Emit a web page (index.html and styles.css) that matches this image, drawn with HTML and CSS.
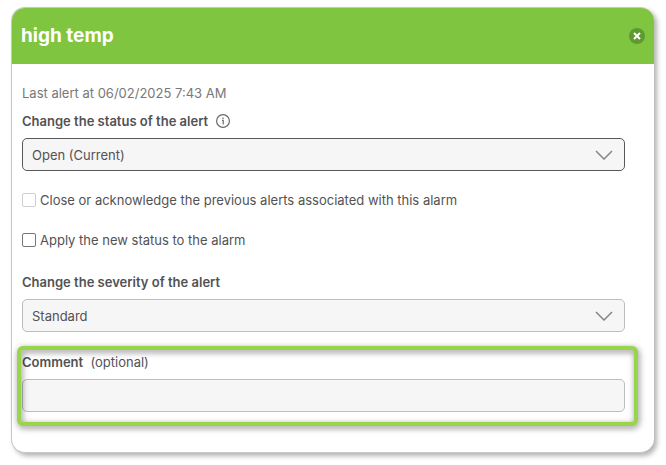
FILE: index.html
```html
<!DOCTYPE html>
<html lang="en">
  <head>
    <meta charset="UTF-8" />
    <meta name="viewport" content="width=device-width, initial-scale=1.0" />
    <title>high temp</title>
    <link rel="stylesheet" href="styles.css">
  </head>
  <body>
    <div class="dialog" role="dialog" aria-labelledby="dialog-title">
      <header class="dialog-header">
        <h1 id="dialog-title">high temp</h1>
        <button type="button" class="close-button" aria-label="Close">
          <svg width="8" height="8" viewBox="0 0 8 8">
            <path d="M1 1 L7 7 M7 1 L1 7" />
          </svg>
        </button>
      </header>

      <form class="dialog-body">
        <p class="last-alert">Last alert at 06/02/2025 7:43 AM</p>

        <div class="field">
          <div class="field-label">
            <label for="status">Change the status of the alert</label>
            <svg class="info-icon" width="14" height="14" viewBox="0 0 14 14">
              <circle cx="7" cy="7" r="6.4" />
              <path d="M6 6.3 H7.2 V10.4 M7 3.6 V4.9" />
            </svg>
          </div>
          <div class="select-box">
            <select id="status" class="control active">
              <option>Open (Current)</option>
            </select>
            <svg class="chevron" width="18" height="10" viewBox="0 0 18 10">
              <path d="M1 1 L9 9 L17 1" />
            </svg>
          </div>
        </div>

        <div class="checks">
          <div class="check">
            <input type="checkbox" id="previous" disabled>
            <label for="previous">Close or acknowledge the previous alerts associated with this alarm</label>
          </div>
          <div class="check">
            <input type="checkbox" id="apply">
            <label for="apply">Apply the new status to the alarm</label>
          </div>
        </div>

        <div class="field">
          <div class="field-label">
            <label for="severity">Change the severity of the alert</label>
          </div>
          <div class="select-box">
            <select id="severity" class="control">
              <option>Standard</option>
            </select>
            <svg class="chevron" width="18" height="10" viewBox="0 0 18 10">
              <path d="M1 1 L9 9 L17 1" />
            </svg>
          </div>
        </div>

        <div class="field highlight">
          <div class="field-label">
            <label for="comment">Comment <span class="optional">(optional)</span></label>
          </div>
          <input type="text" id="comment" class="control">
        </div>
      </form>
    </div>
  </body>
</html>
```
FILE: styles.css
```css
* {
  margin: 0;
  padding: 0;
  box-sizing: border-box;
}

body {
  padding: 7px 12px 12px 11px;
  background: #fff;
  color: #525254;
  font-family: Inter, "Liberation Sans", sans-serif;
  font-size: 13px;
  line-height: 20px;
}

.dialog {
  border: 1px solid #c8c8c8;
  border-right: none;
  border-radius: 14px;
  background: #fff;
  box-shadow: 3px 3px 5px rgba(0, 0, 0, 0.3);
}

/* Header */
.dialog-header {
  display: flex;
  justify-content: space-between;
  align-items: center;
  height: 56px;
  padding: 0 9px;
  border-radius: 13px 13px 0 0;
  background: #7fc540;
  color: #fff;
}

.dialog-header h1 {
  font-size: 19px;
  font-weight: 700;
}

.close-button {
  display: flex;
  justify-content: center;
  align-items: center;
  width: 16px;
  height: 16px;
  border: none;
  border-radius: 50%;
  background: #5f9a30;
  cursor: pointer;
}

.close-button path {
  stroke: #fff;
  stroke-width: 2;
}

/* Form */
.dialog-body {
  padding: 19px 29px 40px 10px;
}

.last-alert {
  margin-bottom: 8px;
  color: #77787a;
}

.field {
  margin-bottom: 20px;
}

.field-label {
  display: flex;
  align-items: center;
  gap: 8px;
  margin-bottom: 7px;
  font-weight: 600;
}

.optional {
  margin-left: 4px;
  font-weight: 400;
}

.info-icon {
  fill: none;
  stroke: #6a6a6c;
  stroke-width: 1.2;
}

.select-box {
  display: grid;
  align-items: center;
}

.select-box > * {
  grid-area: 1 / 1;
}

.control {
  display: block;
  width: 100%;
  height: 33px;
  padding: 0 9px;
  border: 1px solid #bcbdbf;
  border-radius: 5px;
  background: #f6f6f6;
  color: #525254;
  font: inherit;
  appearance: none;
}

.control.active {
  border-color: #58585a;
}

.chevron {
  justify-self: end;
  margin-right: 12px;
  fill: none;
  stroke: #858587;
  stroke-width: 1.5;
  pointer-events: none;
}

.checks {
  display: grid;
  gap: 20px;
  margin: -1px 0 22px;
}

.check {
  display: flex;
  align-items: center;
  gap: 4px;
}

.check input {
  width: 14px;
  height: 14px;
  border: 1px solid #76767a;
  border-radius: 2px;
  background: #fff;
  appearance: none;
}

.check input:disabled {
  border-color: #d0d0d2;
}

.check input:checked {
  appearance: auto;
}

/* Callout frame around the comment field */
.highlight {
  position: relative;
  margin-bottom: 0;
}

.highlight::after {
  content: "";
  position: absolute;
  inset: -6px -13px -14px -5px;
  border: 4px solid #98d44c;
  border-radius: 6px;
  filter: drop-shadow(1px 2px 3px rgba(0, 0, 0, 0.5));
  pointer-events: none;
}
```
